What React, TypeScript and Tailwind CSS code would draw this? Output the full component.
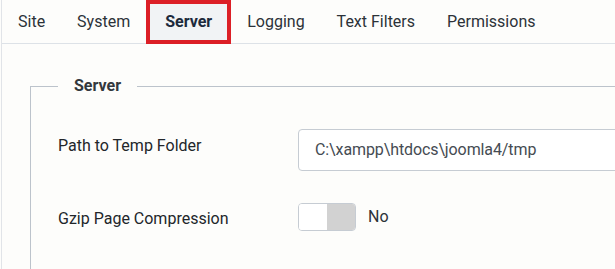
const tabs = ['Site', 'System', 'Server', 'Logging', 'Text Filters', 'Permissions'];

const App: React.FC = () => {
  return (
    <div className="h-[269px] w-[615px] overflow-hidden bg-[#fdfdfb] font-['Roboto',sans-serif] text-[#22262a]">
      <div className="ml-px h-full border-l border-[#e1e4e8]">
        <nav className="flex h-[44px] border-b border-[#dde2e7]">
          {tabs.map((tab) =>
            tab === 'Server' ? (
              <div
                key={tab}
                className="flex h-[44px] items-center border-4 border-[#dc1f26] bg-[#f1f3f5] px-[15px] text-[16px] font-bold text-[#1c2a3c]"
              >
                {tab}
              </div>
            ) : (
              <div key={tab} className="flex items-center px-4 text-[16px] text-[#2c3238]">
                {tab}
              </div>
            )
          )}
        </nav>

        <div className="pl-[28px] pt-[30px]">
          <fieldset className="w-[700px] border border-[#bcc3cb] pb-16 pl-[27px]">
            <legend className="px-4 text-[16px] font-bold leading-6 text-[#33383d]">Server</legend>

            <div className="mt-[31px] flex items-start">
              <label className="w-[240px] pt-[5px] text-[16px] leading-6">Path to Temp Folder</label>
              <div className="flex h-[42px] w-[400px] items-center rounded border border-[#c6ccd3] bg-white px-4 text-[16px] tracking-[-0.1px] text-[#454b52]">
                C:\xampp\htdocs\joomla4/tmp
              </div>
            </div>

            <div className="mt-[32px] flex items-start">
              <label className="w-[240px] pt-1 text-[16px] leading-6">Gzip Page Compression</label>
              <div className="flex items-center">
                <div className="flex h-[28px] w-[58px] overflow-hidden rounded border border-[#c6ccd3]">
                  <span className="w-[28px] bg-white" />
                  <span className="flex-1 bg-[#d2d2d2]" />
                </div>
                <span className="ml-3 text-[16px] text-[#2c3238]">No</span>
              </div>
            </div>
          </fieldset>
        </div>
      </div>
    </div>
  );
};

export default App;
